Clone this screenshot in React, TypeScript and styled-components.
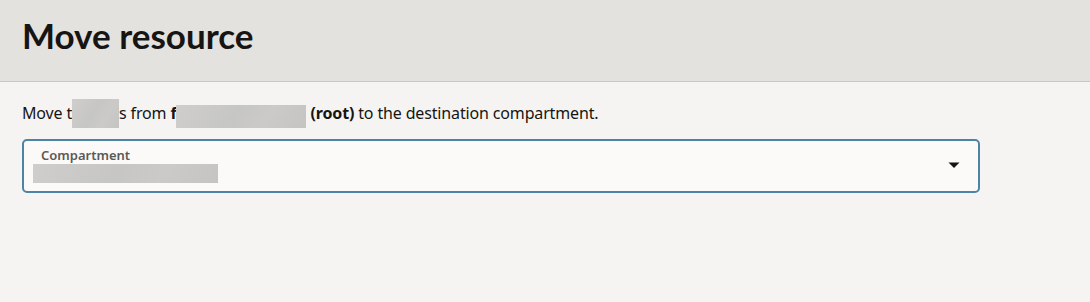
import styled, { createGlobalStyle } from "styled-components";

const GlobalStyle = createGlobalStyle`
  html, body {
    margin: 0;
    padding: 0;
    background: #f5f4f2;
    font-family: "Noto Sans", "Liberation Sans", sans-serif;
    color: #161513;
  }
`;

const Page = styled.div`
  width: 1090px;
  height: 302px;
  background: #f5f4f2;
`;

const Header = styled.header`
  height: 82px;
  background: #e4e2df;
  border-bottom: 1px solid #c9c7c4;
  display: flex;
  align-items: center;
  padding: 0 22px 11px;
  box-sizing: border-box;
`;

const Title = styled.h1`
  margin: 0;
  font-family: Lato, "Noto Sans", sans-serif;
  font-size: 35px;
  font-weight: 700;
  color: #161513;
`;

const Body = styled.main`
  padding: 17px 110px 0 22px;
`;

const Sentence = styled.p`
  margin: 0;
  font-size: 16px;
  line-height: 29px;
  display: flex;
  align-items: center;
  white-space: pre;
  letter-spacing: -0.15px;
`;

const Blur = styled.span<{ w: number; h: number; dy?: number }>`
  display: inline-block;
  width: ${(p) => p.w}px;
  height: ${(p) => p.h}px;
  margin-top: ${(p) => p.dy ?? 0}px;
  background: linear-gradient(120deg, #cfcecc 0%, #c6c6c5 45%, #cbcac9 70%, #c4c4c3 100%);
`;

const Select = styled.div`
  margin-top: 11px;
  height: 54px;
  box-sizing: border-box;
  border: 2px solid #4d84a6;
  border-radius: 5px;
  background: #fbfaf9;
  display: flex;
  align-items: center;
  padding: 0 18px 2px 9px;
`;

const Field = styled.div`
  flex: 1;
  display: flex;
  flex-direction: column;
  gap: 1px;
`;

const Label = styled.span`
  font-size: 13px;
  font-weight: 600;
  color: #5b5955;
  padding-left: 8px;
  line-height: 16px;
`;

const Caret = styled.svg`
  width: 12px;
  height: 8px;
`;

export default function App() {
  return (
    <Page>
      <GlobalStyle />
      <Header>
        <Title>Move resource</Title>
      </Header>
      <Body>
        <Sentence>
          Move t<Blur w={47} h={29} />s from <b>f</b>
          <Blur w={130} h={23} dy={6} />
          <b> (root)</b> to the destination compartment.
        </Sentence>
        <Select>
          <Field>
            <Label>Compartment</Label>
            <Blur w={185} h={19} />
          </Field>
          <Caret viewBox="0 0 12 8">
            <path d="M0.5 1.5 L11.5 1.5 L6 7 Z" fill="#161513" />
          </Caret>
        </Select>
      </Body>
    </Page>
  );
}
